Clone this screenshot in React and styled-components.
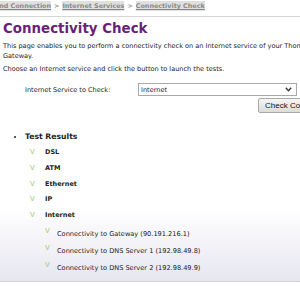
import styled, { createGlobalStyle } from "styled-components";

const Global = createGlobalStyle`
  html, body {
    margin: 0;
    padding: 0;
    background: #fff;
    overflow: hidden;
  }
  body {
    font-family: "DejaVu Sans", Tahoma, sans-serif;
    font-size: 6.55px;
    color: #222;
  }
`;

const Page = styled.div`
  width: 300px;
  height: 300px;
  overflow: hidden;
`;

const Content = styled.div`
  width: 300px;
  height: 282px;
  box-sizing: border-box;
  border-bottom: 1px solid #cfcfd8;
  background: linear-gradient(to bottom, #fff 0%, #fff 74%, #e6e6f0 100%);
  overflow: hidden;
`;

const Crumbs = styled.div`
  height: 17px;
  margin-left: -31px;
  padding-top: 2px;
  box-sizing: border-box;
  border-bottom: 1px solid #d6d6d6;
  white-space: nowrap;
  font-weight: bold;
  font-size: 6.4px;
  line-height: 8px;
  color: #8a8a8a;
`;

const Crumb = styled.a`
  background: #e0e0e0;
  color: #888;
  text-decoration: underline;
  padding: 1px 0;
`;

const Sep = styled.span`
  padding: 0 3px;
`;

const Body = styled.div`
  padding: 4px 3px 0 3px;
`;

const Title = styled.h1`
  margin: 0 0 4px 0;
  font-size: 13.4px;
  font-weight: bold;
  color: #6b1f7c;
  line-height: 16px;
`;

const Para = styled.p`
  margin: 0 0 3px 0;
  line-height: 10px;
  white-space: nowrap;
`;

const FormRow = styled.div`
  display: flex;
  align-items: center;
  margin-top: 9px;
  padding-left: 22px;
`;

const Label = styled.span`
  width: 113px;
`;

const Select = styled.div`
  width: 159px;
  height: 13px;
  box-sizing: border-box;
  border: 1px solid #a8a8a8;
  background: #fff;
  display: flex;
  align-items: center;
  justify-content: space-between;
  padding: 0 4px 0 2px;
`;

const ButtonRow = styled.div`
  display: flex;
  padding-left: 255px;
  margin-top: 2px;
`;

const Button = styled.div`
  flex: none;
  height: 15px;
  box-sizing: border-box;
  padding: 0 6px;
  border: 1px solid #a9a9a9;
  border-radius: 2px;
  background: linear-gradient(#f6f6f6, #dcdcdc);
  font-family: "Liberation Sans", Arial, sans-serif;
  font-size: 8px;
  line-height: 13px;
  white-space: nowrap;
  color: #111;
`;

const Results = styled.ul`
  margin: 19px 0 0 0;
  padding: 0 0 0 22px;
  list-style: disc;
`;

const Heading = styled.li`
  font-weight: bold;
  font-size: 7.7px;
  line-height: 10px;
`;

const Tests = styled.div`
  margin-top: 5px;
  padding-left: 27px;
  display: flex;
  flex-direction: column;
`;

const Test = styled.div`
  display: flex;
  align-items: center;
  height: 10px;
  font-weight: ${(p) => (p.sub ? "normal" : "bold")};
  font-size: ${(p) => (p.sub ? "6.6px" : "6.5px")};
  padding-left: ${(p) => (p.sub ? "15px" : "0")};
  margin-top: ${(p) => p.gap}px;
`;

const Check = styled.span`
  flex: none;
  width: ${(p) => (p.sub ? "12px" : "15px")};
  color: #a8c86c;
  font-size: 7px;
  font-weight: normal;
  line-height: 8px;
  position: relative;
  top: ${(p) => (p.sub ? "-3px" : "0")};
`;

const Chevron = () => (
  <svg width="7" height="5" viewBox="0 0 7 5">
    <path d="M0.8 0.8 L3.5 3.8 L6.2 0.8" fill="none" stroke="#333" strokeWidth="1.3" />
  </svg>
);

const tests = ["DSL", "ATM", "Ethernet", "IP", "Internet"];
const subTests = [
  "Connectivity to Gateway (90.191.216.1)",
  "Connectivity to DNS Server 1 (192.98.49.8)",
  "Connectivity to DNS Server 2 (192.98.49.9)",
];

export default function App() {
  return (
    <Page>
      <Global />
      <Content>
        <Crumbs>
          <Crumb>Broadband Connection</Crumb>
          <Sep>&gt;</Sep>
          <Crumb>Internet Services</Crumb>
          <Sep>&gt;</Sep>
          <Crumb>Connectivity Check</Crumb>
        </Crumbs>
        <Body>
          <Title>Connectivity Check</Title>
          <Para>
            This page enables you to perform a connectivity check on an Internet service of your Thomson
            <br />
            Gateway.
          </Para>
          <Para>Choose an Internet service and click the button to launch the tests.</Para>
          <FormRow>
            <Label>Internet Service to Check:</Label>
            <Select>
              <span>Internet</span>
              <Chevron />
            </Select>
          </FormRow>
          <ButtonRow>
            <Button>Check Connectivity</Button>
          </ButtonRow>
          <Results>
            <Heading>Test Results</Heading>
          </Results>
          <Tests>
            {tests.map((t, i) => (
              <Test key={t} gap={i === 0 ? 0 : 5.8}>
                <Check>V</Check>
                {t}
              </Test>
            ))}
            {subTests.map((t, i) => (
              <Test key={t} sub gap={i === 0 ? 9 : 7}>
                <Check sub>V</Check>
                {t}
              </Test>
            ))}
          </Tests>
        </Body>
      </Content>
    </Page>
  );
}
